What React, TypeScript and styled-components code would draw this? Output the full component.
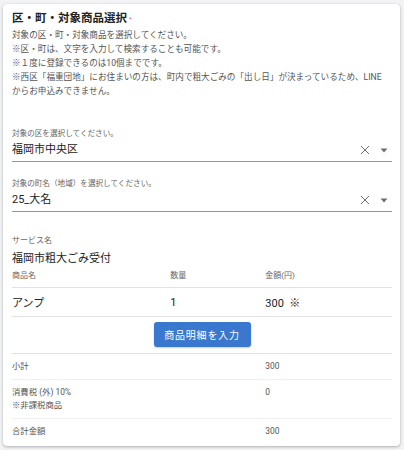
import styled, { createGlobalStyle } from 'styled-components'

const GlobalStyle = createGlobalStyle`
  html, body {
    margin: 0;
    padding: 0;
    background: #f2f3f5;
  }
  body {
    font-family: Roboto, 'Noto Sans CJK JP', sans-serif;
    color: rgba(0, 0, 0, 0.87);
  }
`

const notes = [
  '対象の区・町・対象商品を選択してください。',
  '※区・町は、文字を入力して検索することも可能です。',
  '※１度に登録できるのは10個までです。',
]

const summary = [
  { label: ['小計'], value: '300' },
  { label: ['消費税 (外) 10%', '※非課税商品'], value: '0' },
  { label: ['合計金額'], value: '300' },
]

function ClearIcon(): JSX.Element {
  return (
    <svg width="12" height="12" viewBox="0 0 24 24">
      <path
        d="M4 4 L20 20 M20 4 L4 20"
        stroke="#6f6f6f"
        strokeWidth="2"
        fill="none"
      />
    </svg>
  )
}

function ArrowIcon(): JSX.Element {
  return (
    <svg width="8" height="5" viewBox="0 0 8 5">
      <path d="M0.5 0.5 L7.5 0.5 L4 4.5 Z" fill="#6f6f6f" />
    </svg>
  )
}

function SelectField({
  label,
  value,
  compact,
}: {
  label: string
  value: string
  compact?: boolean
}): JSX.Element {
  return (
    <FieldBox $compact={compact}>
      <FieldLabel>{label}</FieldLabel>
      <FieldRow>
        <FieldValue>{value}</FieldValue>
        <IconBox>
          <ClearIcon />
          <ArrowIcon />
        </IconBox>
      </FieldRow>
    </FieldBox>
  )
}

export default function App(): JSX.Element {
  return (
    <Page>
      <GlobalStyle />
      <Card>
        <Title>
          区・町・対象商品選択<Required>*</Required>
        </Title>
        <Notes>
          {notes.map((note) => (
            <p key={note}>{note}</p>
          ))}
          <p>
            ※西区「福重団地」にお住まいの方は、町内で粗大ごみの「出し日」が決まっているため、LINE
            <br />
            からお申込みできません。
          </p>
        </Notes>

        <SelectField label="対象の区を選択してください。" value="福岡市中央区" />
        <SelectField
          label="対象の町名（地域）を選択してください。"
          value="25_大名"
          compact
        />

        <ServiceBox>
          <SmallLabel>サービス名</SmallLabel>
          <ServiceName>福岡市粗大ごみ受付</ServiceName>
        </ServiceBox>

        <TableHead>
          <span>商品名</span>
          <span>数量</span>
          <span>金額(円)</span>
        </TableHead>
        <TableRow>
          <span>アンプ</span>
          <span>1</span>
          <span>300&nbsp;&nbsp;※</span>
        </TableRow>

        <ButtonRow>
          <BlueButton type="button">商品明細を入力</BlueButton>
        </ButtonRow>

        <Summary>
          {summary.map(({ label, value }) => (
            <SummaryRow key={label[0]}>
              <div>
                {label.map((line) => (
                  <p key={line}>{line}</p>
                ))}
              </div>
              <p>{value}</p>
            </SummaryRow>
          ))}
        </Summary>
      </Card>
    </Page>
  )
}

const Page = styled.div`
  width: 404px;
  height: 450px;
  box-sizing: border-box;
  padding: 4px 4px 0 3px;
`
const Card = styled.div`
  background: #fff;
  border-radius: 4px;
  box-shadow: 0 1px 3px rgba(0, 0, 0, 0.28), 0 0 1px rgba(0, 0, 0, 0.08);
  padding: 6px 8px 2px 9px;
`
const Title = styled.h1`
  margin: 0;
  font-size: 11.5px;
  line-height: 16px;
  font-weight: 700;
  color: #222;
`
const Required = styled.span`
  color: #e53935;
  font-size: 6px;
  font-weight: 400;
  vertical-align: 1px;
  margin-left: 2px;
`
const Notes = styled.div`
  margin-top: 1px;
  font-size: 8.6px;
  line-height: 14px;
  color: #555;
  white-space: nowrap;

  p {
    margin: 0;
  }
`
const FieldBox = styled.div<{ $compact?: boolean }>`
  margin-top: ${({ $compact }) => ($compact ? '16px' : '30px')};
`
const FieldLabel = styled.div`
  font-size: 7.6px;
  line-height: 12px;
  color: #666;
`
const FieldRow = styled.div`
  margin-top: 2px;
  padding-bottom: 3px;
  border-bottom: 1px solid #949494;
  display: flex;
  align-items: center;
  justify-content: space-between;
`
const FieldValue = styled.div`
  font-size: 11px;
  line-height: 16px;
  color: #222;
`
const IconBox = styled.div`
  display: flex;
  align-items: center;
  gap: 9px;
  padding-right: 4px;
`
const ServiceBox = styled.div`
  margin-top: 23px;
`
const SmallLabel = styled.div`
  font-size: 8px;
  line-height: 12px;
  color: #666;
`
const ServiceName = styled.div`
  margin-top: 4px;
  font-size: 11px;
  line-height: 16px;
  color: #222;
`
const TableHead = styled.div`
  margin-top: 3px;
  display: grid;
  grid-template-columns: 5fr 3fr 4fr;
  font-size: 8px;
  line-height: 12px;
  color: #666;
  padding-bottom: 5px;
  border-bottom: 1px solid #e2e2e2;
`
const TableRow = styled.div`
  display: grid;
  grid-template-columns: 5fr 3fr 4fr;
  align-items: center;
  height: 28px;
  font-size: 11px;
  color: #222;
  border-bottom: 1px solid #e2e2e2;
`
const ButtonRow = styled.div`
  display: flex;
  justify-content: center;
  padding: 5px 0 6px;
  border-bottom: 1px solid #e2e2e2;
`
const BlueButton = styled.button`
  width: 97px;
  height: 25px;
  border: none;
  border-radius: 3px;
  background: #3a78cf;
  color: #fff;
  font-family: inherit;
  font-size: 10px;
  letter-spacing: 0.8px;
  box-shadow: 0 1px 2px rgba(0, 0, 0, 0.2);
`
const Summary = styled.div`
  display: flex;
  flex-direction: column;
`
const SummaryRow = styled.div`
  display: grid;
  grid-template-columns: 2fr 1fr;
  padding: 6px 0;
  font-size: 8.4px;
  line-height: 13px;
  color: #555;
  border-bottom: 1px solid #f0f0f0;

  &:last-child {
    border-bottom: none;
  }

  p {
    margin: 0;
  }
`
